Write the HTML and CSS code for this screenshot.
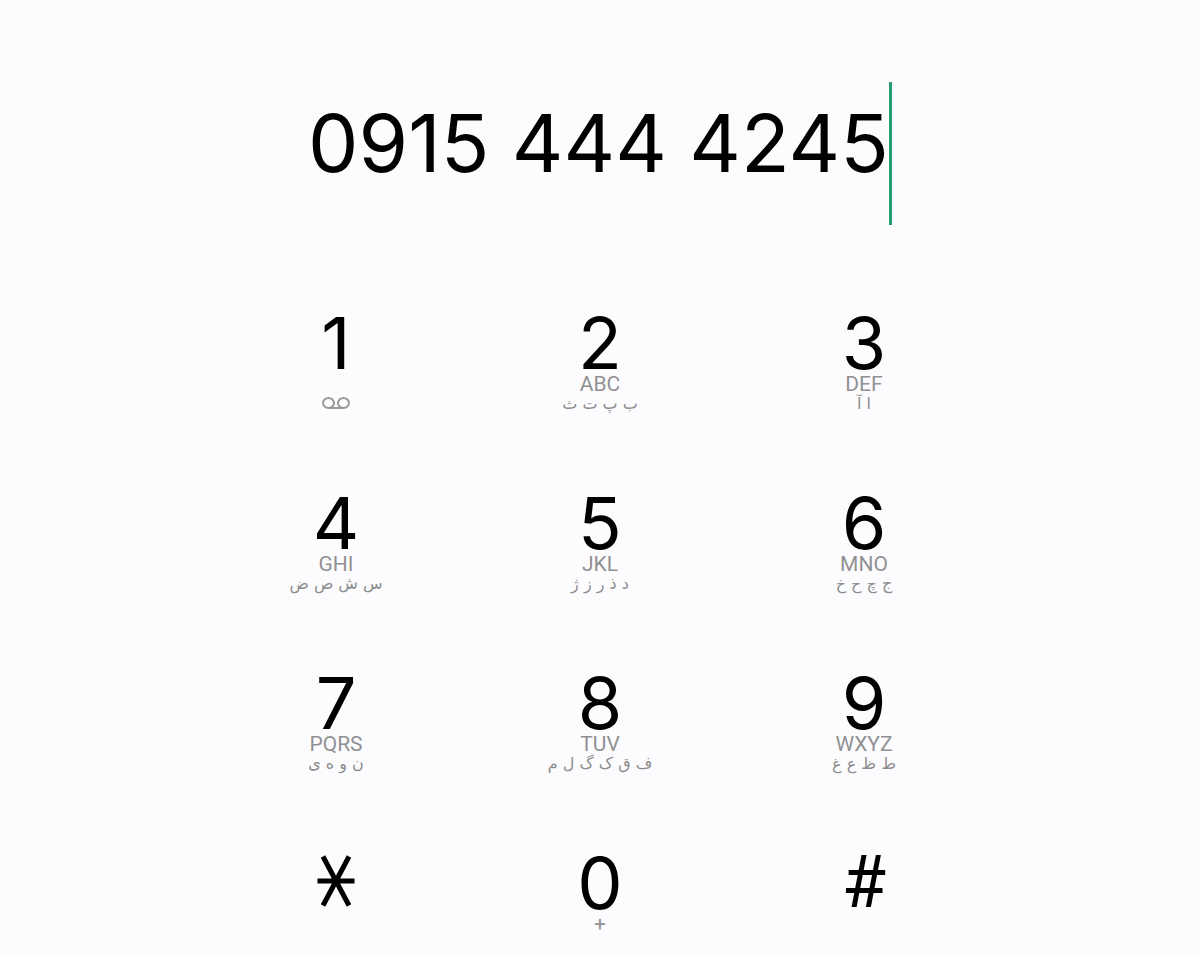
FILE: index.html
```html
<!DOCTYPE html>
<html lang="en">

<head>
    <meta charset="UTF-8">
    <meta name="viewport" content="width=device-width, initial-scale=1.0">
    <title>Dialer</title>
    <link rel="stylesheet" href="styles.css">
</head>

<body>
    <div class="display">
        <input type="tel" class="number" value="0915 444 4245" aria-label="Phone number">
    </div>

    <div class="keypad">
        <button class="key" aria-label="1, voicemail">
            <span class="digit">1</span>
            <span class="letters"></span>
            <svg class="voicemail" viewBox="0 0 28 14" aria-hidden="true">
                <ellipse cx="6.500" cy="7" rx="5.500" ry="5" />
                <ellipse cx="21.500" cy="7" rx="5.500" ry="5" />
                <path d="M6.500 12h15" />
            </svg>
        </button>
        <button class="key">
            <span class="digit">2</span>
            <span class="letters">ABC</span>
            <span class="persian" lang="fa" dir="rtl">ب پ ت ث</span>
        </button>
        <button class="key">
            <span class="digit">3</span>
            <span class="letters">DEF</span>
            <span class="persian" lang="fa" dir="rtl">ا آ</span>
        </button>
        <button class="key">
            <span class="digit">4</span>
            <span class="letters">GHI</span>
            <span class="persian" lang="fa" dir="rtl">س ش ص ض</span>
        </button>
        <button class="key">
            <span class="digit">5</span>
            <span class="letters">JKL</span>
            <span class="persian" lang="fa" dir="rtl">د ذ ر ز ژ</span>
        </button>
        <button class="key">
            <span class="digit">6</span>
            <span class="letters">MNO</span>
            <span class="persian" lang="fa" dir="rtl">ج چ ح خ</span>
        </button>
        <button class="key">
            <span class="digit">7</span>
            <span class="letters">PQRS</span>
            <span class="persian" lang="fa" dir="rtl">ن و ه ی</span>
        </button>
        <button class="key">
            <span class="digit">8</span>
            <span class="letters">TUV</span>
            <span class="persian" lang="fa" dir="rtl">ف ق ک گ ل م</span>
        </button>
        <button class="key">
            <span class="digit">9</span>
            <span class="letters">WXYZ</span>
            <span class="persian" lang="fa" dir="rtl">ط ظ ع غ</span>
        </button>
        <button class="key" aria-label="star">
            <svg class="star" viewBox="0 0 38 60" aria-hidden="true">
                <path d="M0.500 28h37M6 3.500l26 49M32 3.500L6 52.500" />
            </svg>
        </button>
        <button class="key">
            <span class="digit">0</span>
            <span class="letters">+</span>
        </button>
        <button class="key">
            <span class="digit symbol">#</span>
        </button>
    </div>
</body>

</html>
```

FILE: styles.css
```css
body {
    margin: 0;
    background-color: #fcfcfe;
    color: #000;
    font-family: Inter, sans-serif;
}

.display {
    display: flex;
    justify-content: center;
    padding-top: 82px;
}

.number {
    field-sizing: content;
    box-sizing: border-box;
    height: 143px;
    padding: 0 0 22px;
    border: none;
    border-right: 3px solid #2a9d6e;
    background: none;
    color: inherit;
    font-family: inherit;
    font-size: 80px;
    outline: none;
}

.keypad {
    display: grid;
    grid-template-columns: repeat(3, 1fr);
    row-gap: 80px;
    width: 66%;
    margin: 0 auto;
    padding-top: 88px;
}

.key {
    display: flex;
    flex-direction: column;
    align-items: center;
    padding: 0;
    border: none;
    background: none;
    color: inherit;
    font-family: inherit;
    cursor: pointer;
}

.digit {
    font-size: 72px;
    line-height: 60px;
}

.symbol {
    font-family: Roboto, sans-serif;
}

.letters {
    height: 20px;
    color: #919193;
    font-family: Roboto, sans-serif;
    font-size: 21px;
    line-height: 22px;
}

.persian {
    height: 20px;
    color: #8c8c8e;
    font-family: "DejaVu Sans", sans-serif;
    font-size: 16px;
    line-height: 22px;
    white-space: nowrap;
}

.voicemail {
    width: 28px;
    height: 20px;
    fill: none;
    stroke: #999;
    stroke-width: 2;
}

.star {
    width: 38px;
    height: 60px;
    fill: none;
    stroke: #000;
    stroke-width: 5;
}
```
